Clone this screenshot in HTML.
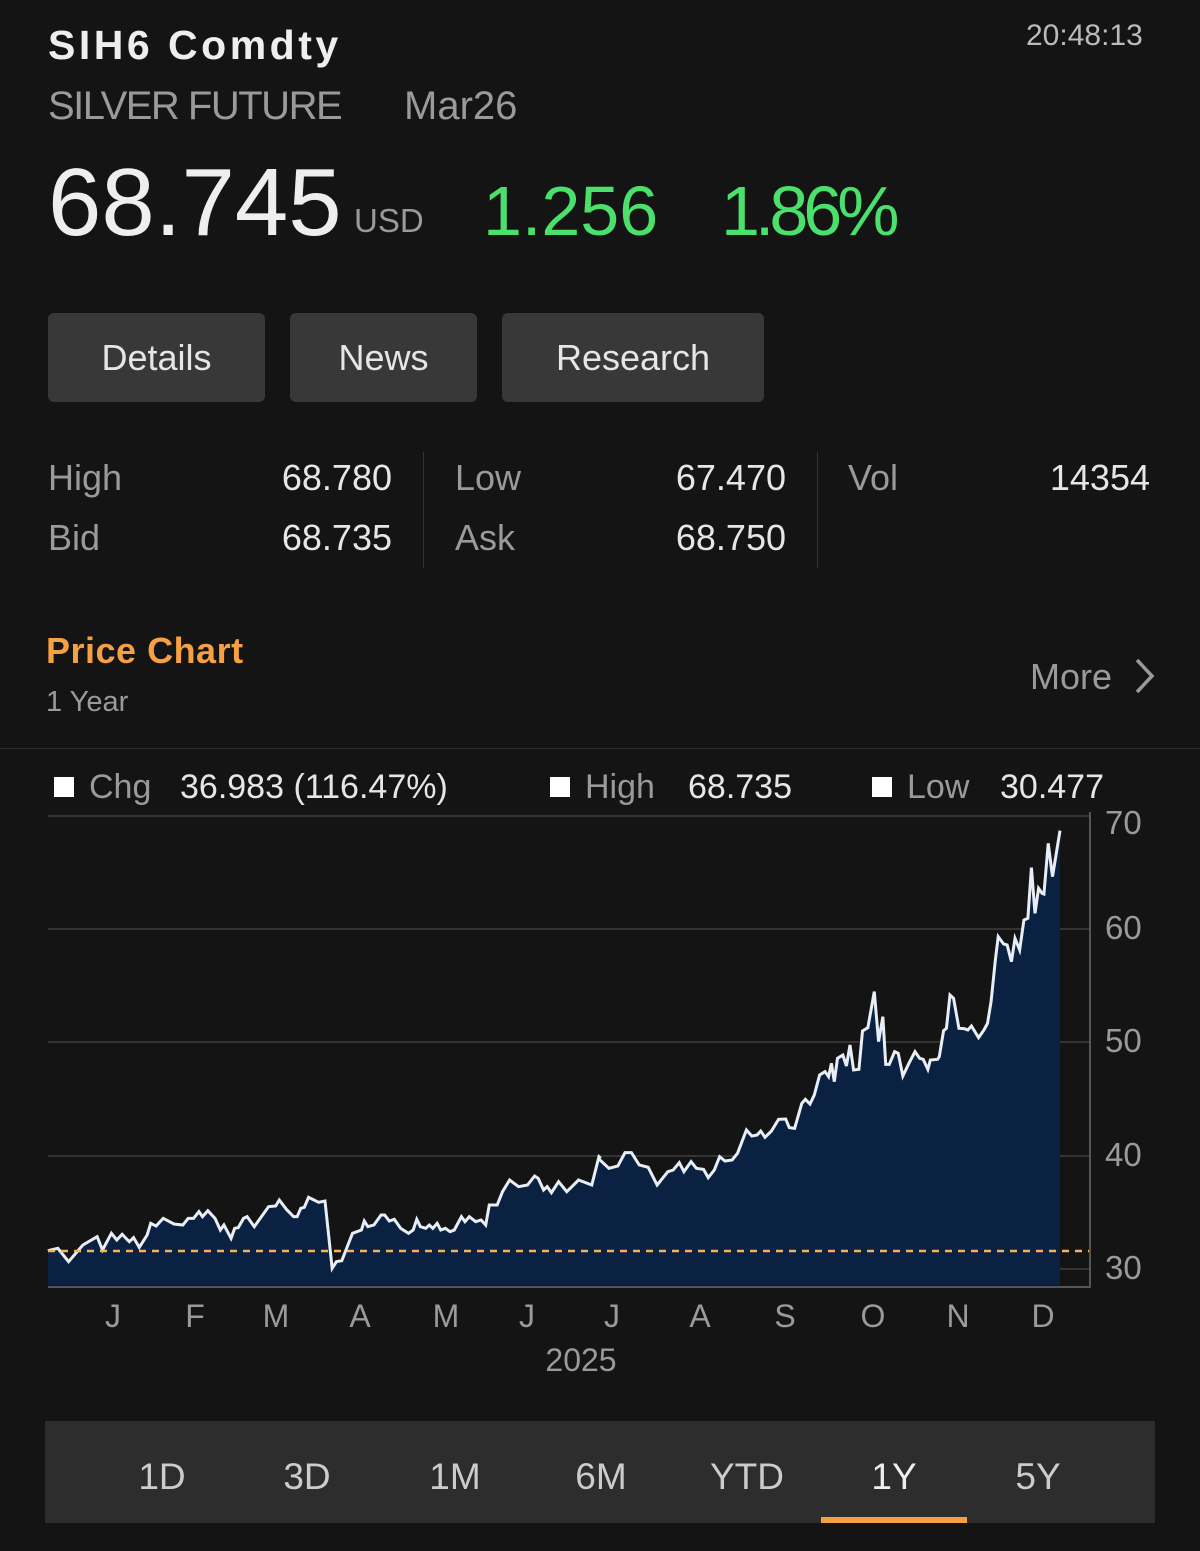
<!DOCTYPE html>
<html><head><meta charset="utf-8"><style>
*{margin:0;padding:0;box-sizing:border-box}
body{width:1200px;height:1551px;background:#141414;font-family:"Liberation Sans",sans-serif;position:relative;overflow:hidden;color:#e6e6e6}
.a{position:absolute;white-space:nowrap;line-height:1}
.g{color:#9a9a9a}
.btn{position:absolute;top:313px;height:89px;background:#383838;border-radius:6px;color:#e6e6e6;font-size:36px;display:flex;align-items:center;justify-content:center}
.r{text-align:right}
.c{transform:translateX(-50%)}
</style></head><body>
<div class="a" style="left:48px;top:25px;font-size:41px;font-weight:bold;color:#eee;letter-spacing:3.5px">SIH6 Comdty</div>
<div class="a g" style="left:1026px;top:21px;font-size:30px;color:#bbb">20:48:13</div>
<div class="a g" style="left:48px;top:86px;font-size:40px;letter-spacing:-1.5px">SILVER FUTURE</div>
<div class="a g" style="left:404px;top:86px;font-size:40px">Mar26</div>
<div class="a" style="left:48px;top:155px;font-size:96px;color:#eee">68.745</div>
<div class="a g" style="left:354px;top:204px;font-size:33px">USD</div>
<div class="a" style="left:483px;top:176px;font-size:70px;color:#4bdf6b">1.256</div>
<div class="a" style="left:721px;top:176px;font-size:70px;color:#4bdf6b;letter-spacing:-5px">1.86%</div>

<div class="btn" style="left:48px;width:217px">Details</div>
<div class="btn" style="left:290px;width:187px">News</div>
<div class="btn" style="left:502px;width:262px">Research</div>

<div class="a g" style="left:48px;top:460px;font-size:36px">High</div>
<div class="a r" style="right:808px;top:460px;font-size:36px">68.780</div>
<div class="a g" style="left:48px;top:520px;font-size:36px">Bid</div>
<div class="a r" style="right:808px;top:520px;font-size:36px">68.735</div>
<div class="a" style="left:423px;top:452px;width:1px;height:116px;background:#333"></div>
<div class="a g" style="left:455px;top:460px;font-size:36px">Low</div>
<div class="a r" style="right:414px;top:460px;font-size:36px">67.470</div>
<div class="a g" style="left:455px;top:520px;font-size:36px">Ask</div>
<div class="a r" style="right:414px;top:520px;font-size:36px">68.750</div>
<div class="a" style="left:817px;top:452px;width:1px;height:116px;background:#333"></div>
<div class="a g" style="left:848px;top:460px;font-size:36px">Vol</div>
<div class="a r" style="right:50px;top:460px;font-size:36px">14354</div>

<div class="a" style="left:46px;top:633px;font-size:36px;font-weight:bold;color:#f5a043;letter-spacing:0.5px">Price Chart</div>
<div class="a g" style="left:46px;top:688px;font-size:29px">1 Year</div>
<div class="a g" style="left:1030px;top:659px;font-size:36px">More</div>
<svg class="a" style="left:1130px;top:656px" width="30" height="40"><path d="M7 4 L22 20 L7 36" stroke="#9a9a9a" stroke-width="3.5" fill="none"/></svg>
<div class="a" style="left:0;top:748px;width:1200px;height:1px;background:#2a2a2a"></div>

<div class="a" style="left:54px;top:777px;width:20px;height:20px;background:#fff"></div>
<div class="a g" style="left:89px;top:770px;font-size:34px">Chg</div>
<div class="a" style="left:180px;top:770px;font-size:34px">36.983 (116.47%)</div>
<div class="a" style="left:550px;top:777px;width:20px;height:20px;background:#fff"></div>
<div class="a g" style="left:585px;top:770px;font-size:34px">High</div>
<div class="a" style="left:688px;top:770px;font-size:34px">68.735</div>
<div class="a" style="left:872px;top:777px;width:20px;height:20px;background:#fff"></div>
<div class="a g" style="left:907px;top:770px;font-size:34px">Low</div>
<div class="a" style="left:1000px;top:770px;font-size:34px">30.477</div>

<svg class="a" style="left:0;top:0" width="1200" height="1551">
<g stroke="#333" stroke-width="2">
<line x1="48" y1="816" x2="1090" y2="816"/><line x1="48" y1="929" x2="1090" y2="929"/>
<line x1="48" y1="1042" x2="1090" y2="1042"/><line x1="48" y1="1156" x2="1090" y2="1156"/>
<line x1="48" y1="1269" x2="1090" y2="1269"/>
</g>
<g transform="translate(40,800) scale(0.357143,0.333333)">
<polygon fill="#0b2142" points="22,1455 22,1352 50,1345 80,1385 120,1335 160,1310 175,1350 200,1300 215,1320 230,1303 250,1325 262,1313 278,1342 300,1305 310,1270 325,1278 345,1255 375,1272 400,1275 415,1255 430,1255 445,1235 455,1250 470,1232 490,1255 505,1290 515,1275 535,1315 545,1285 555,1283 570,1255 580,1250 600,1280 640,1220 660,1218 670,1200 690,1228 710,1250 720,1250 730,1225 740,1222 752,1192 780,1207 798,1203 818,1405 830,1385 845,1382 875,1300 900,1290 908,1263 918,1280 935,1275 955,1245 965,1245 978,1263 992,1258 1010,1285 1032,1300 1045,1290 1055,1258 1065,1280 1080,1285 1090,1275 1100,1285 1112,1270 1122,1290 1135,1285 1148,1295 1160,1290 1180,1250 1190,1265 1202,1250 1220,1265 1235,1260 1248,1275 1258,1215 1280,1215 1295,1175 1315,1140 1340,1160 1365,1155 1385,1128 1395,1135 1410,1170 1420,1160 1432,1178 1452,1145 1475,1175 1508,1140 1545,1155 1565,1070 1570,1070 1570,1455"/>
<polyline fill="none" stroke="#e8eef5" stroke-width="3" vector-effect="non-scaling-stroke" points="22,1352 50,1345 80,1385 120,1335 160,1310 175,1350 200,1300 215,1320 230,1303 250,1325 262,1313 278,1342 300,1305 310,1270 325,1278 345,1255 375,1272 400,1275 415,1255 430,1255 445,1235 455,1250 470,1232 490,1255 505,1290 515,1275 535,1315 545,1285 555,1283 570,1255 580,1250 600,1280 640,1220 660,1218 670,1200 690,1228 710,1250 720,1250 730,1225 740,1222 752,1192 780,1207 798,1203 818,1405 830,1385 845,1382 875,1300 900,1290 908,1263 918,1280 935,1275 955,1245 965,1245 978,1263 992,1258 1010,1285 1032,1300 1045,1290 1055,1258 1065,1280 1080,1285 1090,1275 1100,1285 1112,1270 1122,1290 1135,1285 1148,1295 1160,1290 1180,1250 1190,1265 1202,1250 1220,1265 1235,1260 1248,1275 1258,1215 1280,1215 1295,1175 1315,1140 1340,1160 1365,1155 1385,1128 1395,1135 1410,1170 1420,1160 1432,1178 1452,1145 1475,1175 1508,1140 1545,1155 1565,1070 1570,1075"/>
</g>
<g transform="translate(600,800) scale(0.357143,0.333333)">
<polygon fill="#0b2142" points="0,1455 0,1078 25,1105 50,1098 70,1058 88,1058 110,1095 135,1102 160,1155 190,1115 205,1110 222,1088 235,1115 255,1085 270,1105 290,1108 303,1133 320,1110 335,1070 350,1083 370,1080 385,1060 410,990 425,1008 440,1005 450,993 462,1012 480,993 500,958 520,957 530,983 545,985 565,910 575,898 588,912 600,885 615,825 630,815 640,830 648,790 656,845 665,775 680,765 690,798 700,735 710,810 725,808 735,693 750,683 768,575 780,725 792,650 800,793 810,793 825,755 835,760 848,828 865,790 882,755 895,775 905,778 918,808 925,780 945,778 950,770 962,692 970,685 980,585 990,595 1005,685 1020,686 1030,690 1040,678 1060,713 1075,690 1085,670 1095,605 1107,480 1115,410 1130,432 1140,435 1152,485 1162,415 1175,450 1187,360 1198,355 1208,203 1218,340 1228,265 1238,280 1243,282 1255,130 1267,230 1288,92 1288,1455"/>
<polyline fill="none" stroke="#e8eef5" stroke-width="3" vector-effect="non-scaling-stroke" points="-5,1075 25,1105 50,1098 70,1058 88,1058 110,1095 135,1102 160,1155 190,1115 205,1110 222,1088 235,1115 255,1085 270,1105 290,1108 303,1133 320,1110 335,1070 350,1083 370,1080 385,1060 410,990 425,1008 440,1005 450,993 462,1012 480,993 500,958 520,957 530,983 545,985 565,910 575,898 588,912 600,885 615,825 630,815 640,830 648,790 656,845 665,775 680,765 690,798 700,735 710,810 725,808 735,693 750,683 768,575 780,725 792,650 800,793 810,793 825,755 835,760 848,828 865,790 882,755 895,775 905,778 918,808 925,780 945,778 950,770 962,692 970,685 980,585 990,595 1005,685 1020,686 1030,690 1040,678 1060,713 1075,690 1085,670 1095,605 1107,480 1115,410 1130,432 1140,435 1152,485 1162,415 1175,450 1187,360 1198,355 1208,203 1218,340 1228,265 1238,280 1243,282 1255,130 1267,230 1288,92"/>
</g>
<line x1="48" y1="1251" x2="1090" y2="1251" stroke="#f5b060" stroke-width="2.5" stroke-dasharray="7,6"/>
<line x1="48" y1="1287" x2="1091" y2="1287" stroke="#555" stroke-width="2"/>
<line x1="1090" y1="812" x2="1090" y2="1288" stroke="#555" stroke-width="2"/>
</svg>
<div class="a g" style="left:1105px;top:806px;font-size:33px">70</div>
<div class="a g" style="left:1105px;top:911px;font-size:33px">60</div>
<div class="a g" style="left:1105px;top:1024px;font-size:33px">50</div>
<div class="a g" style="left:1105px;top:1138px;font-size:33px">40</div>
<div class="a g" style="left:1105px;top:1251px;font-size:33px">30</div>

<div class="a g c" style="left:113px;top:1300px;font-size:32px">J</div>
<div class="a g c" style="left:195px;top:1300px;font-size:32px">F</div>
<div class="a g c" style="left:276px;top:1300px;font-size:32px">M</div>
<div class="a g c" style="left:360px;top:1300px;font-size:32px">A</div>
<div class="a g c" style="left:446px;top:1300px;font-size:32px">M</div>
<div class="a g c" style="left:527px;top:1300px;font-size:32px">J</div>
<div class="a g c" style="left:612px;top:1300px;font-size:32px">J</div>
<div class="a g c" style="left:700px;top:1300px;font-size:32px">A</div>
<div class="a g c" style="left:785px;top:1300px;font-size:32px">S</div>
<div class="a g c" style="left:873px;top:1300px;font-size:32px">O</div>
<div class="a g c" style="left:958px;top:1300px;font-size:32px">N</div>
<div class="a g c" style="left:1043px;top:1300px;font-size:32px">D</div>
<div class="a g c" style="left:581px;top:1344px;font-size:32px">2025</div>

<div class="a" style="left:45px;top:1421px;width:1110px;height:102px;background:#2d2d2d"></div>
<div class="a c" style="left:162px;top:1458px;font-size:37px;color:#ccc">1D</div>
<div class="a c" style="left:307px;top:1458px;font-size:37px;color:#ccc">3D</div>
<div class="a c" style="left:455px;top:1458px;font-size:37px;color:#ccc">1M</div>
<div class="a c" style="left:601px;top:1458px;font-size:37px;color:#ccc">6M</div>
<div class="a c" style="left:747px;top:1458px;font-size:37px;color:#ccc">YTD</div>
<div class="a c" style="left:894px;top:1458px;font-size:37px;color:#eee">1Y</div>
<div class="a c" style="left:1038px;top:1458px;font-size:37px;color:#ccc">5Y</div>
<div class="a" style="left:821px;top:1517px;width:146px;height:6px;background:#f5a043"></div>
</body></html>
